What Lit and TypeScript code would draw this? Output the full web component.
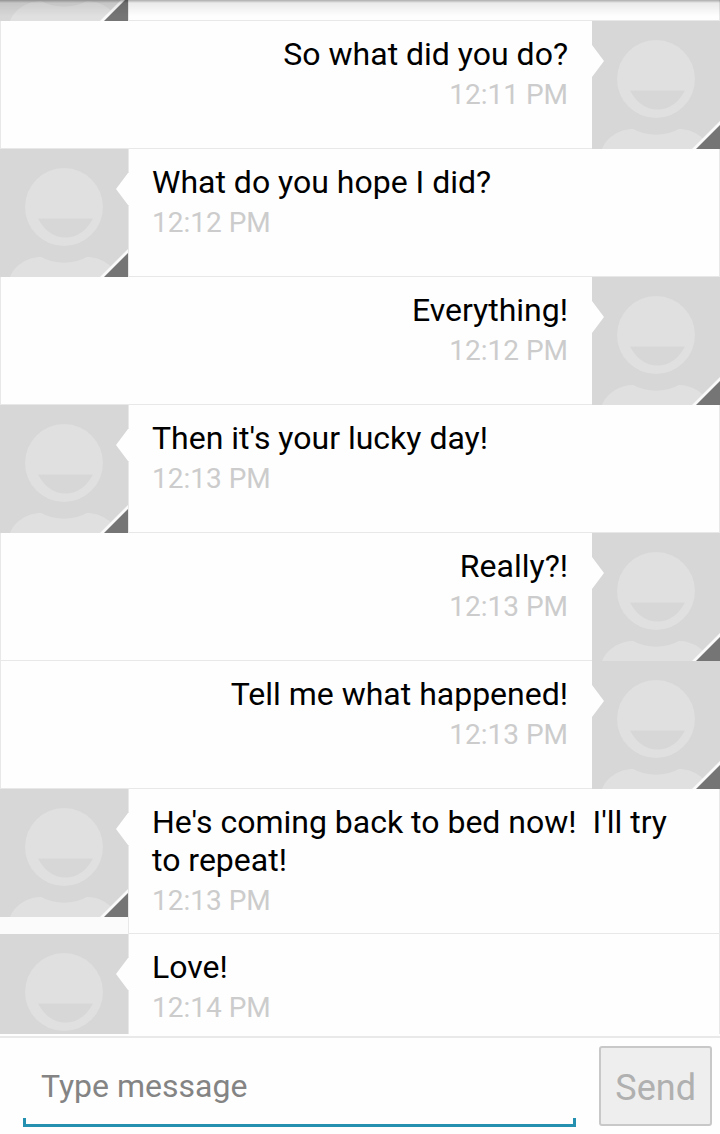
import { LitElement, html, svg, css, nothing } from "lit";
import { customElement, property, query, state } from "lit/decorators.js";
import { classMap } from "lit/directives/class-map.js";

interface Message {
  from: "me" | "them";
  text: string;
  time: string;
}

const messages: Message[] = [
  { from: "them", text: "", time: "" },
  { from: "me", text: "So what did you do?", time: "12:11 PM" },
  { from: "them", text: "What do you hope I did?", time: "12:12 PM" },
  { from: "me", text: "Everything!", time: "12:12 PM" },
  { from: "them", text: "Then it's your lucky day!", time: "12:13 PM" },
  { from: "me", text: "Really?!", time: "12:13 PM" },
  { from: "me", text: "Tell me what happened!", time: "12:13 PM" },
  { from: "them", text: "He's coming back to bed now!  I'll try to repeat!", time: "12:13 PM" },
  { from: "them", text: "Love!", time: "12:14 PM" },
];

@customElement("contact-badge")
export class ContactBadge extends LitElement {
  @property() side: "left" | "right" = "left";

  static styles = css`
    :host { display: block; width: 128px; height: 128px; flex: none; position: relative; z-index: 1; }
    .art { display: block; width: 100%; height: 100%; overflow: visible; }
  `;

  render() {
    const notch = this.side === "left"
      ? svg`<path fill="#fefefe" d="M129 24H128L116 40L128 56H129Z" />`
      : svg`<path fill="#fefefe" d="M0 24L12 40L0 56Z" />`;
    return html`
      <svg class="art" viewBox="0 0 128 128" aria-hidden="true">
        <rect width="128" height="128" fill="#d7d7d7" />
        <circle cx="64" cy="58" r="39" fill="#e0e0e0" />
        <path fill="#d7d7d7" d="M38 69.500H93C87 81 78 88.500 65.500 88.500C53 88.500 44 81 38 69.500Z" />
        <path fill="#e0e0e0" d="M10 128C14 117 27 108 41 108C55 115.500 73 115.500 87 108C101 108 114 117 118 128Z" />
        <path fill="#fafafa" d="M128 100V128H100Z" />
        <path fill="#757575" d="M128 104V128H104Z" />
        ${notch}
      </svg>
    `;
  }
}

@customElement("app-root")
export class AppRoot extends LitElement {
  @state() private draft = "";
  @query(".thread") private thread!: HTMLElement;

  static styles = css`
    :host {
      display: flex;
      flex-direction: column;
      height: 100vh;
      position: relative;
      background: #fefefe;
      font-family: Roboto, sans-serif;
      color: #000;
    }
    .shade {
      position: absolute;
      z-index: 2;
      inset: 0 0 auto;
      height: 16px;
      pointer-events: none;
      background: linear-gradient(rgba(0, 0, 0, 0.32), rgba(0, 0, 0, 0.08) 3px, rgba(0, 0, 0, 0));
    }
    .thread {
      flex: 1;
      min-height: 0;
      overflow-y: auto;
      scrollbar-width: none;
      margin: 0;
      padding: 0;
      list-style: none;
      background: #fbfbfb;
    }
    .row { display: flex; align-items: flex-start; min-height: 128px; }
    .row.me { flex-direction: row-reverse; }
    .body {
      box-sizing: border-box;
      flex: 1;
      min-width: 0;
      align-self: stretch;
      padding: 14px 24px 16px 23px;
      border: solid #e8e8e8;
      border-width: 0 1px 1px;
      background: #fefefe;
    }
    .me .body { border-right: 0; text-align: right; }
    .text {
      margin: 0 0 5px;
      font-size: 32px;
      line-height: 38px;
      white-space: pre-wrap;
    }
    .time { display: block; font-size: 28px; line-height: 33px; color: #ccc; }
    .composer {
      display: flex;
      align-items: flex-start;
      margin-top: 2px;
      border-top: 2px solid #e9e9e9;
      padding: 8px 8px 7px 23px;
    }
    .field {
      flex: 1;
      min-width: 0;
      position: relative;
      margin-right: 23px;
    }
    .field::after {
      content: "";
      position: absolute;
      inset: auto 0 0;
      height: 6px;
      border: solid #2590b0;
      border-width: 0 3px 3px;
      pointer-events: none;
    }
    .input {
      display: block;
      box-sizing: border-box;
      width: 100%;
      height: 81px;
      padding: 0 18px 2px;
      border: 0;
      outline: 0;
      background: transparent;
      font: 32px Roboto, sans-serif;
      color: #000;
    }
    .input::placeholder { color: #848484; opacity: 1; }
    .send {
      height: 80px;
      padding: 4px 14px 0;
      border: 2px solid #c8c8c8;
      border-radius: 3px;
      background: #eee;
      font: 36px Roboto, sans-serif;
      color: #b0b0b0;
    }
  `;

  async firstUpdated() {
    await Promise.resolve();
    this.thread.scrollTop = 107;
  }

  render() {
    return html`
      <ul class="thread">
        ${messages.map((m) => html`
          <li class=${classMap({ row: true, me: m.from === "me" })}>
            <contact-badge side=${m.from === "me" ? "right" : "left"}></contact-badge>
            <div class="body">
              ${m.text ? html`<p class="text">${m.text}</p><time class="time">${m.time}</time>` : nothing}
            </div>
          </li>
        `)}
      </ul>
      <form class="composer" @submit=${(e: Event) => e.preventDefault()}>
        <div class="field">
          <input
            class="input"
            type="text"
            aria-label="Type message"
            placeholder="Type message"
            .value=${this.draft}
            @input=${(e: Event) => (this.draft = (e.target as HTMLInputElement).value)}
          />
        </div>
        <button class="send" type="submit" ?disabled=${!this.draft}>Send</button>
      </form>
      <div class="shade"></div>
    `;
  }
}
